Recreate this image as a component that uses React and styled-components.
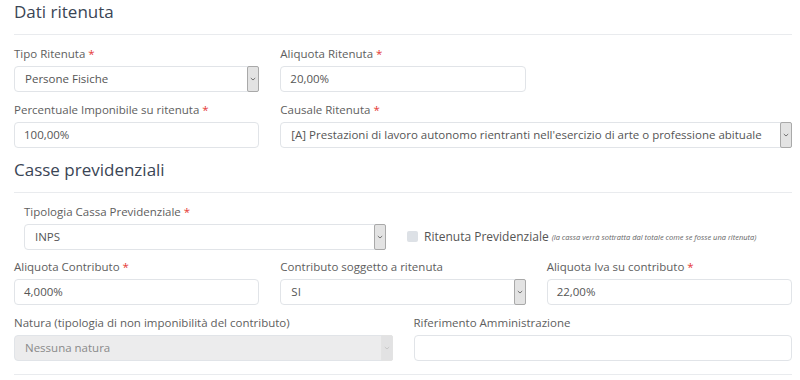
import styled, { createGlobalStyle } from "styled-components";

const GlobalStyle = createGlobalStyle`
  html, body {
    margin: 0;
    padding: 0;
    background: #ffffff;
  }
  body {
    font-family: "Open Sans", "Liberation Sans", sans-serif;
    color: #555;
  }
`;

/** piccola freccia della select */
const Chevron = () => (
  <svg width="6" height="4" viewBox="0 0 6 4">
    <path d="M0.8 1 L3 3 L5.2 1" fill="none" stroke="currentColor" strokeWidth="0.9" />
  </svg>
);

const Select = ({ value, disabled }) => (
  <SelectBox $disabled={disabled}>
    <SelectValue>{value}</SelectValue>
    <ArrowBox $disabled={disabled}>
      <Chevron />
    </ArrowBox>
  </SelectBox>
);

const Field = ({ label, required, span, children }) => (
  <FieldBox $span={span}>
    <Label>
      {label}
      {required && <Req> *</Req>}
    </Label>
    {children}
  </FieldBox>
);

const App = () => {
  return (
    <>
      <GlobalStyle />
      <Page>
        {/* Dati ritenuta */}
        <Title>Dati ritenuta</Title>
        <Divider />
        <Grid $cols={3}>
          <Field label="Tipo Ritenuta" required>
            <Select value="Persone Fisiche" />
          </Field>
          <Field label="Aliquota Ritenuta" required>
            <Input>20,00%</Input>
          </Field>
          <div />
          <Field label="Percentuale Imponibile su ritenuta" required>
            <Input>100,00%</Input>
          </Field>
          <Field label="Causale Ritenuta" required span={2}>
            <Select value="[A] Prestazioni di lavoro autonomo rientranti nell'esercizio di arte o professione abituale" />
          </Field>
        </Grid>

        {/* Casse previdenziali */}
        <Title $top={10}>Casse previdenziali</Title>
        <Divider />
        <CassaRow>
          <CassaField>
            <Field label="Tipologia Cassa Previdenziale" required>
              <Select value="INPS" />
            </Field>
          </CassaField>
          <CheckGroup>
            <CheckBox />
            <CheckText>Ritenuta Previdenziale</CheckText>
            <Note>(la cassa verrà sottratta dal totale come se fosse una ritenuta)</Note>
          </CheckGroup>
        </CassaRow>
        <Grid $cols={3} $shift={-1}>
          <Field label="Aliquota Contributo" required>
            <Input>4,000%</Input>
          </Field>
          <Field label="Contributo soggetto a ritenuta">
            <Select value="SI" />
          </Field>
          <Field label="Aliquota Iva su contributo" required>
            <Input>22,00%</Input>
          </Field>
        </Grid>
        <Grid $cols={2}>
          <Field label="Natura (tipologia di non imponibilità del contributo)">
            <Select value="Nessuna natura" disabled />
          </Field>
          <Field label="Riferimento Amministrazione">
            <Input />
          </Field>
        </Grid>
        <Divider $top={13} />
      </Page>
    </>
  );
};

export default App;

const Page = styled.div`
  width: 778px;
  padding: 0 8px 0 14px;
`;

const Title = styled.h2`
  margin: ${(p) => p.$top || 0}px 0 0 0;
  font-size: 17px;
  line-height: 23px;
  font-weight: 400;
  color: #3a4555;
`;

const Divider = styled.div`
  height: 1px;
  background: #e9ebee;
  margin: ${(p) => p.$top || 11}px 0 1px 0;
`;

const Grid = styled.div`
  display: grid;
  grid-template-columns: repeat(${(p) => p.$cols}, 1fr);
  column-gap: 21px;
  margin-top: ${(p) => p.$shift || 0}px;
`;

const FieldBox = styled.div`
  display: flex;
  flex-direction: column;
  grid-column: span ${(p) => p.$span || 1};
  margin-top: 10px;
`;

const Label = styled.label`
  font-size: 11.5px;
  line-height: 16px;
  color: #5e5e5e;
  margin-bottom: 4px;
  white-space: nowrap;
`;

const Req = styled.span`
  color: #e53935;
`;

const Input = styled.div`
  box-sizing: border-box;
  height: 26px;
  border: 1px solid #e1e4e8;
  border-radius: 4px;
  background: #fff;
  padding: 0 9px;
  font-size: 11.5px;
  line-height: 24px;
  color: #555;
`;

const SelectBox = styled.div`
  box-sizing: border-box;
  height: 26px;
  display: flex;
  align-items: stretch;
  border: 1px solid #e1e4e8;
  border-radius: 4px;
  background: ${(p) => (p.$disabled ? "#ececed" : "#fff")};
  color: ${(p) => (p.$disabled ? "#8a8a8a" : "#555")};
`;

const SelectValue = styled.div`
  flex: 1;
  padding: 0 10px;
  font-size: 11.5px;
  line-height: 24px;
  white-space: nowrap;
  overflow: hidden;
`;

const ArrowBox = styled.div`
  box-sizing: border-box;
  width: 12px;
  margin: -1px -1px -1px 0;
  display: flex;
  align-items: center;
  justify-content: center;
  border: 1px solid ${(p) => (p.$disabled ? "#e3e3e3" : "#a9a9a9")};
  border-radius: 2px;
  background: ${(p) => (p.$disabled ? "#e2e2e3" : "#e3e3e3")};
  color: ${(p) => (p.$disabled ? "#c4c4c4" : "#666")};
`;

const CassaRow = styled.div`
  display: flex;
  align-items: flex-end;
`;

const CassaField = styled.div`
  width: 362px;
  padding-left: 10px;
`;

const CheckGroup = styled.div`
  height: 26px;
  display: flex;
  align-items: center;
  margin: 0 0 1px 21px;
  white-space: nowrap;
`;

const CheckBox = styled.span`
  width: 11px;
  height: 11px;
  border-radius: 2px;
  background: #dde1e6;
  margin-right: 6px;
`;

const CheckText = styled.span`
  font-size: 12px;
  color: #555;
`;

const Note = styled.span`
  font-size: 7.5px;
  font-style: italic;
  color: #666;
  margin-left: 3px;
  padding-top: 2px;
`;
